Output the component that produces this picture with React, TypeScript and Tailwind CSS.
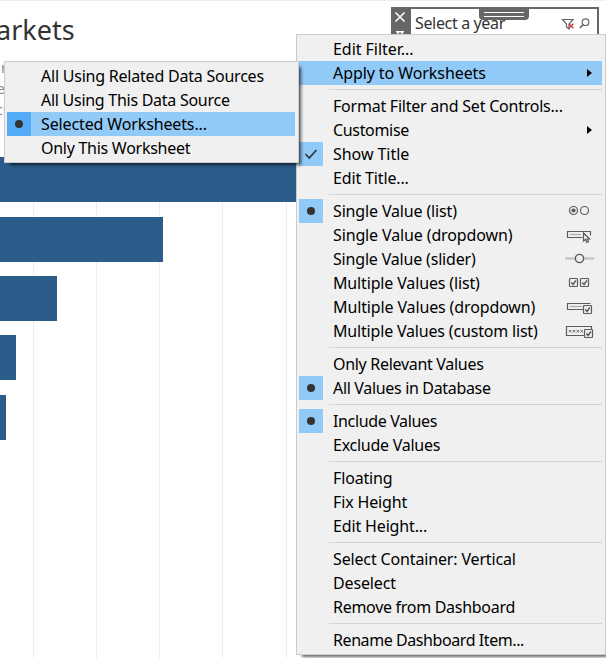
import type { ReactNode } from 'react';

type Mark = 'dot' | 'check';
type Item = { label: string; mark?: Mark; active?: boolean; arrow?: boolean; icon?: ReactNode; tracking?: string };

function CheckBox({ x, y }: { x: number; y: number }) {
  return (
    <g>
      <rect x={x} y={y} width="8" height="8" rx="0.8" fill="#efefef" />
      <path d={`M${x + 1.8} ${y + 4}l1.8 2 2.8-4.2`} strokeWidth="1.5" />
    </g>
  );
}

function Glyph({ children }: { children: ReactNode }) {
  return (
    <svg width="32" height="24" viewBox="0 0 32 24" fill="none" stroke="#5c5c5c" strokeWidth="1.2" className="shrink-0">
      {children}
    </svg>
  );
}

const radios = (
  <Glyph>
    <circle cx="9.5" cy="11.5" r="4" />
    <circle cx="9.5" cy="11.5" r="2.1" fill="#5c5c5c" stroke="none" />
    <circle cx="20.5" cy="11.5" r="4" />
  </Glyph>
);
const dropdown = (
  <Glyph>
    <path d="M18.5 14.5H3.5v-6h23v4" />
    <path d="M6 11.5h11" stroke="#aaa" />
    <path d="M19.5 10v8l2-1.5 1.4 3 1.6-.8-1.4-2.7h2.6z" fill="#efefef" />
  </Glyph>
);
const slider = (
  <Glyph>
    <path d="M1 11.5h29" stroke="#c8c8c8" strokeWidth="2.6" />
    <circle cx="15.5" cy="11.5" r="4.1" fill="#efefef" strokeWidth="1.4" />
  </Glyph>
);
const checks = (
  <Glyph>
    <CheckBox x={5.5} y={7.5} />
    <CheckBox x={16.5} y={7.5} />
  </Glyph>
);
const dropdownCheck = (
  <Glyph>
    <path d="M19 14.5H3.5v-6h23" />
    <path d="M6 11.5h12" stroke="#aaa" />
    <CheckBox x={19.5} y={10.5} />
  </Glyph>
);
const customList = (
  <Glyph>
    <path d="M20 16.5H2.5v-9h25v3" />
    <path
      d="M5 11l2.4 2.4m-2.4 0l2.4-2.4M8.8 11l2.4 2.4m-2.4 0l2.4-2.4M12.6 11l2.4 2.4m-2.4 0l2.4-2.4M16.4 11l2.4 2.4m-2.4 0l2.4-2.4"
      strokeWidth="0.9"
    />
    <CheckBox x={20.5} y={10.5} />
  </Glyph>
);

const groups: Item[][] = [
  [
    { label: 'Edit Filter...', tracking: 'tracking-[-0.05px]' },
    { label: 'Apply to Worksheets', active: true, arrow: true, tracking: 'tracking-[-0.08px]' },
  ],
  [
    { label: 'Format Filter and Set Controls...', tracking: 'tracking-[-0.23px]' },
    { label: 'Customise', arrow: true, tracking: 'tracking-[-0.33px]' },
    { label: 'Show Title', mark: 'check', tracking: 'tracking-[-0.05px]' },
    { label: 'Edit Title...' },
  ],
  [
    { label: 'Single Value (list)', mark: 'dot', icon: radios },
    { label: 'Single Value (dropdown)', icon: dropdown, tracking: 'tracking-[-0.13px]' },
    { label: 'Single Value (slider)', icon: slider, tracking: 'tracking-[-0.18px]' },
    { label: 'Multiple Values (list)', icon: checks },
    { label: 'Multiple Values (dropdown)', icon: dropdownCheck, tracking: 'tracking-[-0.13px]' },
    { label: 'Multiple Values (custom list)', icon: customList, tracking: 'tracking-[-0.18px]' },
  ],
  [
    { label: 'Only Relevant Values', tracking: 'tracking-[-0.3px]' },
    { label: 'All Values in Database', mark: 'dot', tracking: 'tracking-[-0.33px]' },
  ],
  [
    { label: 'Include Values', mark: 'dot', tracking: 'tracking-[-0.36px]' },
    { label: 'Exclude Values', tracking: 'tracking-[-0.26px]' },
  ],
  [{ label: 'Floating' }, { label: 'Fix Height' }, { label: 'Edit Height...' }],
  [
    { label: 'Select Container: Vertical' },
    { label: 'Deselect' },
    { label: 'Remove from Dashboard', tracking: 'tracking-[-0.29px]' },
  ],
  [{ label: 'Rename Dashboard Item...', tracking: 'tracking-[-0.42px]' }],
];

const submenu: Item[] = [
  { label: 'All Using Related Data Sources', tracking: 'tracking-[-0.22px]' },
  { label: 'All Using This Data Source', tracking: 'tracking-[-0.27px]' },
  { label: 'Selected Worksheets...', mark: 'dot', active: true, tracking: 'tracking-[-0.13px]' },
  { label: 'Only This Worksheet', tracking: 'tracking-[-0.27px]' },
];

const bars = [
  'mt-0 w-[296px]',
  'mt-[15px] w-[163px]',
  'mt-[14px] w-[57px]',
  'mt-[14px] w-[16px]',
  'mt-[15px] w-[6px]',
];

function Row({ item }: { item: Item }) {
  const markBg = item.mark ? (item.active ? 'bg-[#55abf7]' : 'bg-[#91c9f7]') : '';
  return (
    <div className={`flex h-6 items-center whitespace-nowrap ${item.active ? 'bg-[#91c9f7]' : ''}`}>
      <div className={`flex size-6 shrink-0 items-center justify-center ${markBg}`}>
        {item.mark === 'dot' && <span className="size-2 rounded-full bg-[#333]" />}
        {item.mark === 'check' && (
          <svg width="14" height="12" viewBox="0 0 14 12" fill="none" stroke="#333" strokeWidth="1.6">
            <path d="M1.5 6l3.7 4L12.5 2" />
          </svg>
        )}
      </div>
      <span className={`ml-[10px] flex-1 text-base leading-6 ${item.tracking ?? 'tracking-[-0.15px]'}`}>
        {item.label}
      </span>
      {item.arrow && (
        <svg width="5" height="8" viewBox="0 0 5 8" className="mb-px mr-[10px]">
          <path d="M0 0l5 4-5 4z" fill="#000" />
        </svg>
      )}
      {item.icon && <div className="mr-[6px]">{item.icon}</div>}
    </div>
  );
}

export default function App() {
  return (
    <div className="relative h-[658px] w-[606px] overflow-hidden border-t border-[#eee] bg-white font-['Noto_Sans','Open_Sans',sans-serif] text-black">
      <header className="flex h-[156px] justify-between pr-[7px]">
        <div>
          <h1 className="-ml-[4px] mt-[11px] text-[27px] leading-9 text-[#333]">arkets</h1>
          <div className="mt-[9px] w-4 text-[14px] leading-[21px] text-[#888]">
            <div className="ml-px">r</div>
            <div className="-ml-[3px]">e</div>
            <div className="-ml-[4px]">cr</div>
          </div>
        </div>
        <div className="relative mt-[6px] flex h-10 w-[208px] border-2 border-[#666] text-[#333]">
          <div className="flex w-[18px] flex-col items-center bg-[#666]">
            <svg width="18" height="28" viewBox="0 0 18 28" fill="none" stroke="#fff" strokeWidth="1.6" className="shrink-0">
              <path d="M2.5 3.5l9 9M11.5 3.5l-9 9" />
              <path d="M3 22.8h8M5 22.8v5M9 22.8v5" strokeWidth="1.4" />
            </svg>
          </div>
          <span className="ml-[4px] flex-1 whitespace-nowrap text-[16px] leading-[28px] tracking-[-0.35px]">Select a year</span>
          <svg width="30" height="16" viewBox="0 0 30 16" fill="none" stroke="#666" strokeWidth="1.2" className="mr-[6px] mt-[7px] shrink-0">
            <path d="M1.5 3.5h10.5L8 8V13L5.5 11V8z" />
            <path d="M8 7.8l4.4 4.4M12.4 7.8l-4.4 4.4" stroke="#d33" strokeWidth="1.3" />
            <circle cx="24.5" cy="6.2" r="3.3" />
            <path d="M22.2 8.6L18.8 12" strokeWidth="1.6" />
          </svg>
          <div className="absolute -top-px left-[86px] flex h-3 w-[50px] flex-col items-center gap-[3px] rounded-b-sm bg-[#666] pt-[4px]">
            <span className="h-px w-10 bg-white" />
            <span className="h-px w-10 bg-white" />
          </div>
        </div>
      </header>

      <main className="flex h-[501px] w-[350px] flex-col bg-[linear-gradient(90deg,transparent_33px,#ededed_33px,#ededed_34px,transparent_34px,transparent_96px,#ededed_96px,#ededed_97px,transparent_97px,transparent_159px,#ededed_159px,#ededed_160px,transparent_160px,transparent_222px,#ededed_222px,#ededed_223px,transparent_223px,transparent_286px,#ededed_286px,#ededed_287px,transparent_287px)]">
        {bars.map((bar) => (
          <div key={bar} className={`h-[45px] shrink-0 bg-[#2b5c8a] ${bar}`} />
        ))}
      </main>

      <div className="absolute left-[296px] top-[33px] w-[310px] border border-[#ccc] bg-[#f0f0f0] py-[2px] pl-[2px] pr-[3px] shadow-[4px_4px_3px_-2px_rgba(0,0,0,0.6)]">
        {groups.map((group, i) => (
          <div key={group[0].label}>
            {i > 0 && (
              <div className="flex h-[9px] items-center">
                <div className="ml-[30px] h-px flex-1 bg-[#d5d5d5]" />
              </div>
            )}
            {group.map((item) => (
              <Row key={item.label} item={item} />
            ))}
          </div>
        ))}
      </div>

      <div className="absolute left-[4px] top-[60px] w-[295px] border border-[#ccc] bg-[#f0f0f0] py-[2px] pl-[2px] pr-[3px] shadow-[4px_4px_3px_-2px_rgba(0,0,0,0.65)]">
        {submenu.map((item) => (
          <Row key={item.label} item={item} />
        ))}
      </div>
    </div>
  );
}
